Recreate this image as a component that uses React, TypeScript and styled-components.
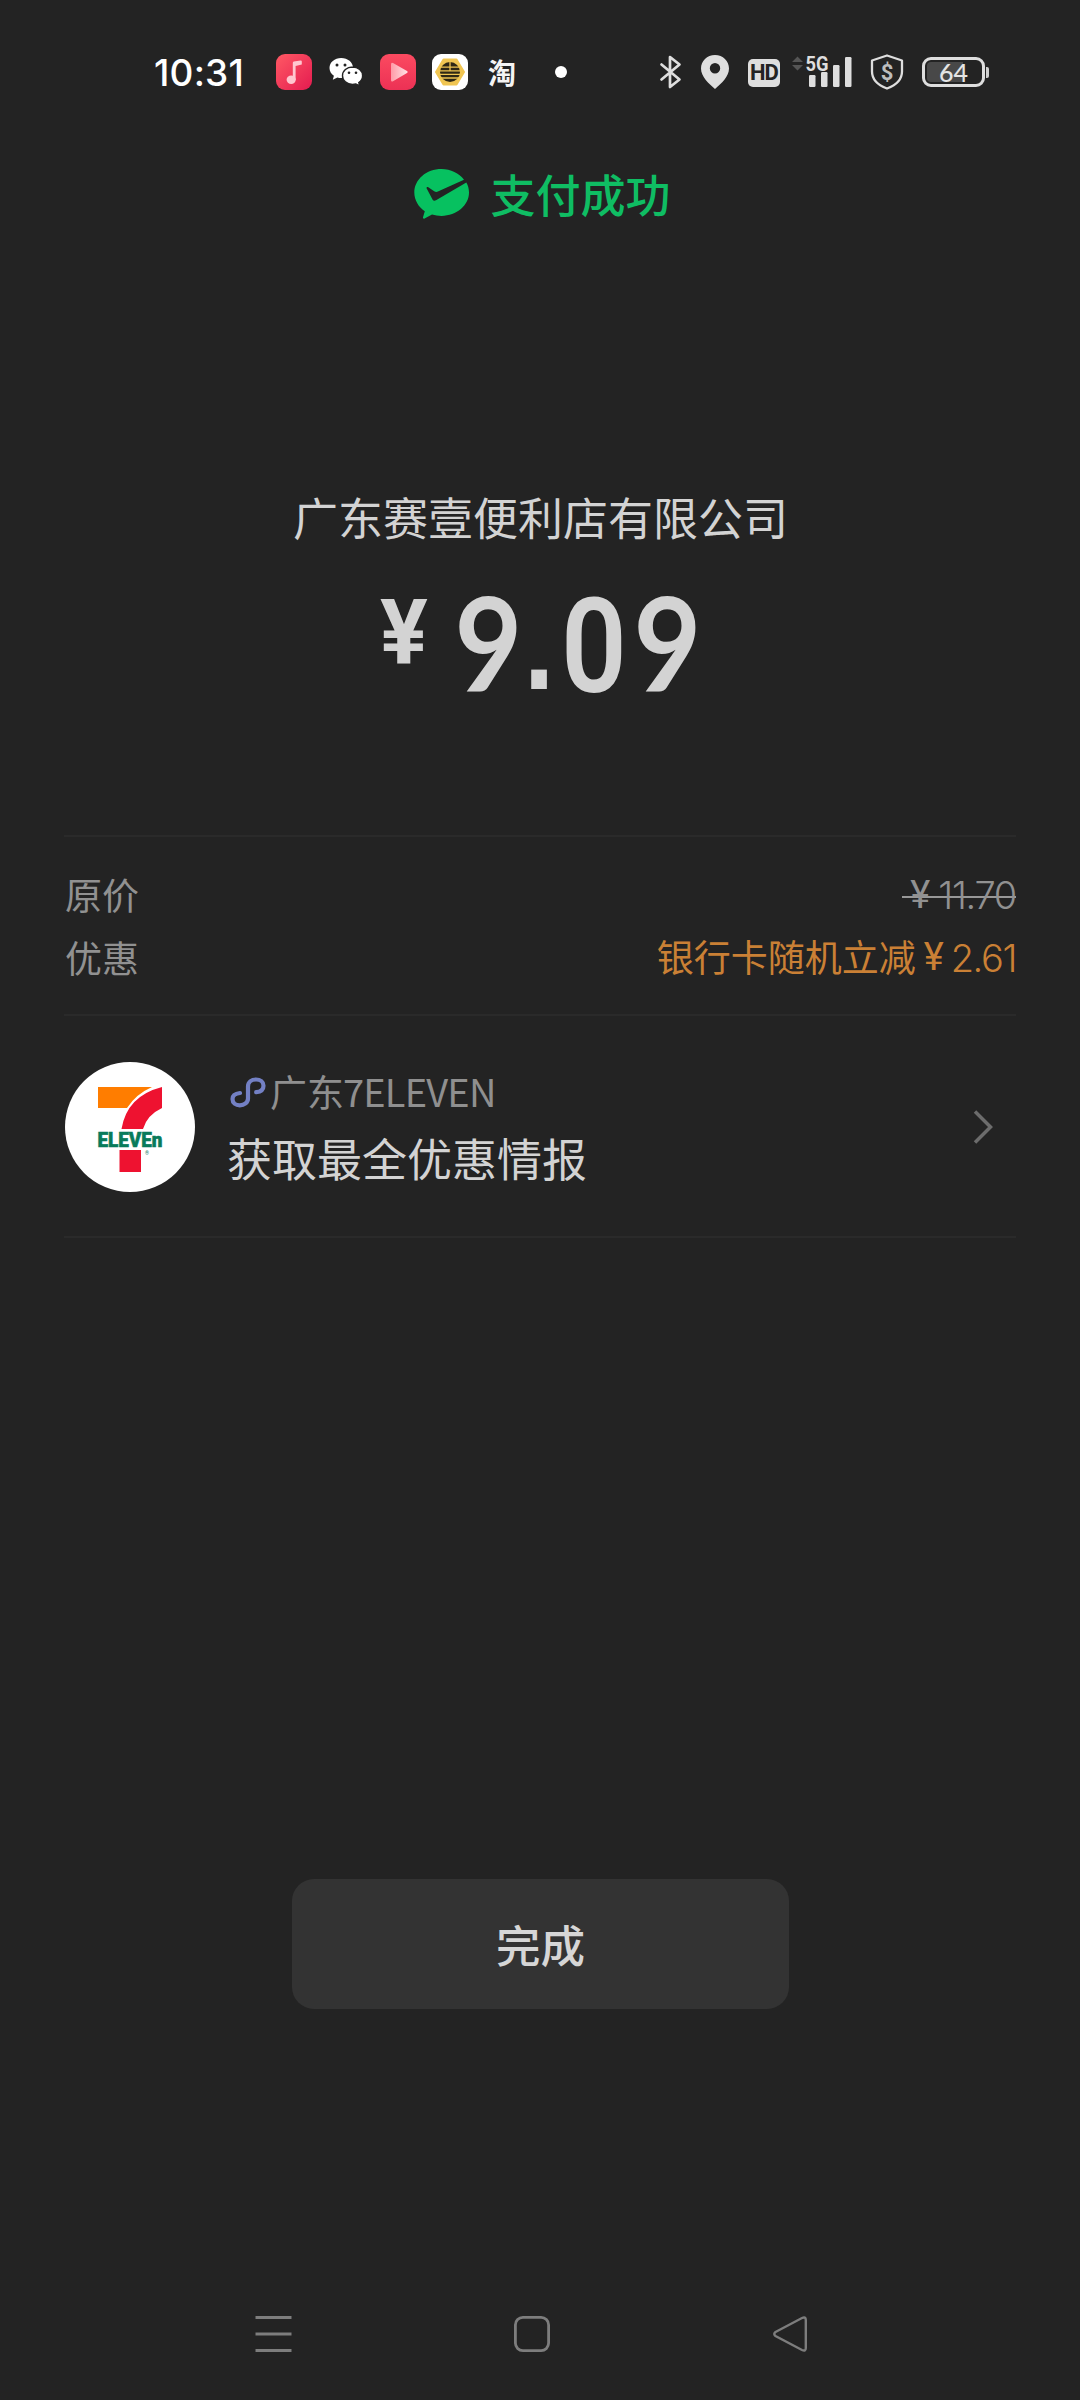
import React from 'react';
import styled, { createGlobalStyle } from 'styled-components';

const cjk = '"Noto Sans CJK SC", sans-serif';

const GlobalStyle = createGlobalStyle`
  * { box-sizing: border-box; }
  body { margin: 0; background: #232323; font-family: ${cjk}; }
  svg { display: block; flex: none; overflow: visible; }
`;

const Screen = styled.div`
  width: 1080px;
  height: 2400px;
  display: flex;
  flex-direction: column;
  background: #232323;
  color: #d3d3d3;
  white-space: nowrap;
  overflow: hidden;
`;

const StatusBar = styled.header`
  height: 144px;
  padding: 0 91px 0 154px;
  display: flex;
  align-items: center;
  justify-content: space-between;
`;

const StatusGroup = styled.div<{ $gap: number }>`
  display: flex;
  align-items: center;
  gap: ${p => p.$gap}px;
`;

const Clock = styled.time`
  width: 106px;
  padding-top: 1px;
  font: 500 37px/44px Inter, sans-serif;
  letter-spacing: 0.2px;
  color: #fff;
`;

const AppTile = styled.div<{ $bg: string }>`
  width: 36px;
  height: 36px;
  border-radius: 9px;
  display: flex;
  align-items: center;
  justify-content: center;
  background: ${p => p.$bg};
`;

const TaobaoGlyph = styled.span`
  font: 700 28px/36px ${cjk};
  color: #f4f4f4;
`;

const Dot = styled.span`
  width: 12px;
  height: 12px;
  margin-left: 19px;
  border-radius: 50%;
  background: #fff;
`;

const HdBadge = styled.span`
  width: 32px;
  height: 28px;
  margin-top: 2px;
  border-radius: 5px;
  display: flex;
  align-items: center;
  justify-content: center;
  background: #dedede;
  color: #232323;
  font: 700 22px/28px Roboto, sans-serif;
  letter-spacing: -1px;
`;

const Battery = styled.div`
  display: flex;
  align-items: center;
  gap: 1px;
`;

const BatteryBody = styled.div`
  width: 63px;
  height: 30px;
  border: 3px solid #dedede;
  border-radius: 9px;
  display: flex;
  align-items: center;
  justify-content: center;
  background: linear-gradient(90deg, #484848 36px, #232323 36px) content-box;
  padding: 2px;
  color: #e4e4e4;
  font: 500 25px/26px Lato, sans-serif;
`;

const BatteryTip = styled.span`
  width: 3px;
  height: 11px;
  border-radius: 0 2px 2px 0;
  background: #cfcfcf;
`;

const ResultHeader = styled.div`
  height: 106px;
  padding: 0 0 6px 5px;
  display: flex;
  justify-content: center;
  align-items: center;
  gap: 20px;
`;

const ResultText = styled.h1`
  margin: 0;
  font: 500 45px/66px ${cjk};
  color: #0fbd63;
`;

const Payee = styled.h2`
  margin: 234px 0 0;
  padding-left: 1px;
  text-align: center;
  font: 400 45px/66px ${cjk};
`;

const Amount = styled.div`
  height: 144px;
  margin-top: 20px;
  padding-left: 380px;
  display: flex;
  align-items: flex-start;
`;

const Currency = styled.span`
  width: 75px;
  margin-top: 13px;
  font: 700 91px/100px Roboto, sans-serif;
  transform: scaleX(0.98);
  transform-origin: left center;
`;

const Digit = styled.span<{ $width: number; $scale: number; $font: string }>`
  width: ${p => p.$width}px;
  display: flex;
  justify-content: center;
  font: ${p => p.$font};
  transform: scaleX(${p => p.$scale});
`;

const Section = styled.section`
  width: 952px;
  margin: 0 64px;
  border-top: 2px solid #2a2a2a;
`;

const Prices = styled(Section)`
  height: 179px;
  margin-top: 121px;
  padding: 26px 0 0 1px;
`;

const PriceRow = styled.div`
  height: 63px;
  display: flex;
  align-items: center;
  justify-content: space-between;
  font: 400 37px/63px ${cjk};
  color: #919191;
`;

const Original = styled.span`
  display: flex;
  align-items: center;
  background: linear-gradient(#989898, #989898) 0 34px / 100% 2px no-repeat;
`;

const Discount = styled.span`
  display: flex;
  color: #ca8035;
`;

const Money = styled.span<{ $spacing: number }>`
  padding-top: 2px;
  font: 350 38px/63px Inter, sans-serif;
  letter-spacing: ${p => p.$spacing}px;
`;

const YenSign = styled.span<{ $after: number }>`
  padding-top: 1px;
  font: 400 38px/63px Roboto, sans-serif;
  margin: 0 ${p => p.$after}px 0 8px;
`;

const Merchant = styled(Section)`
  height: 224px;
  padding: 2px 23px 0 1px;
  display: flex;
  align-items: center;
  border-bottom: 2px solid #2a2a2a;
`;

const Avatar = styled.div`
  width: 130px;
  height: 130px;
  border-radius: 50%;
  background: #fff;
`;

const MerchantText = styled.div`
  flex: 1;
  margin-left: 32px;
  display: flex;
  flex-direction: column;
`;

const MerchantName = styled.div`
  display: flex;
  align-items: center;
  gap: 4px;
  padding-left: 3px;
  font: 400 37px/56px ${cjk};
  color: #8f8f8f;
`;

const LatinName = styled.span`
  font: 400 38px/56px ${cjk};
  letter-spacing: -0.8px;
  margin-left: -5px;
`;

const Promo = styled.div`
  margin-top: 6px;
  font: 400 45px/66px ${cjk};
`;

const DoneButton = styled.button`
  width: 497px;
  height: 130px;
  margin: 641px 0 0 292px;
  padding: 0;
  border: 0;
  border-radius: 22px;
  background: #333;
  color: #d6d6d6;
  font: 500 44.5px/66px ${cjk};
`;

const NavBar = styled.nav`
  height: 132px;
  margin-top: auto;
  padding: 0 272px 0 255px;
  display: flex;
  align-items: center;
  justify-content: space-between;
`;

const MusicIcon = () => (
  <svg width="36" height="36" viewBox="0 0 36 36">
    <ellipse cx="15.2" cy="25.8" rx="4.6" ry="4.2" fill="#ffc6cf" />
    <path d="M16.800 26V8.8Q16.800 7.800 17.800 7.600L24.600 6.500Q25.800 6.400 25.800 7.500V10.400L19.600 12V26Z" fill="#ffc6cf" />
  </svg>
);

const WeChatIcon = () => (
  <svg width="36" height="36" viewBox="0 0 36 36">
    <path d="M13.2 4C6.6 4 1.5 8.4 1.5 14c0 3.2 1.7 6 4.4 7.8L4.8 25.8l4.6-2.4c1.2.4 2.5.5 3.8.5 6.6 0 11.8-4.400 11.800-10S19.800 4 13.200 4Z" fill="#fff" />
    <path d="M24.500 13c-5.700 0-10 3.800-10 8.700s4.300 8.700 10 8.700c1.200 0 2.300-.2 3.400-.5l3.800 2-.9-3.300c2.400-1.600 3.800-4.100 3.800-6.900 0-4.900-4.400-8.700-10.100-8.700Z" fill="#fff" stroke="#232323" strokeWidth="1.400" />
    <g fill="#232323"><circle cx="9" cy="11" r="1.500" /><circle cx="17" cy="11" r="1.500" /><circle cx="21" cy="18.800" r="1.300" /><circle cx="28" cy="18.800" r="1.300" /></g>
  </svg>
);

const PlayIcon = () => (
  <svg width="36" height="36" viewBox="0 0 36 36">
    <defs><linearGradient id="play"><stop stopColor="#ff9aa7" /><stop offset="1" stopColor="#ffe3e6" /></linearGradient></defs>
    <path d="M11 10.200Q11 8 13 9L27 17Q28.600 18 27 19L13 27.300Q11 28.200 11 26Z" fill="url(#play)" />
  </svg>
);

const BeeIcon = () => (
  <svg width="36" height="36" viewBox="0 0 36 36">
    <path d="M11.500 5.500h13L32 18l-7.500 12.500h-13L4 18Z" fill="#f0c552" stroke="#f0c552" strokeWidth="2" strokeLinejoin="round" />
    <circle cx="18" cy="18" r="10" fill="#2e2715" />
    <path d="M9 13.200h18M8 16.800h20M8 20.400h20M9 24h18M18 8v8.500" stroke="#eec452" strokeWidth="1.300" />
  </svg>
);

const BluetoothIcon = () => (
  <svg width="22" height="34" viewBox="0 0 22 34" fill="none" stroke="#dedede" strokeWidth="2.700" strokeLinejoin="round" strokeLinecap="round">
    <path d="M1.500 9.500 19.500 24.500 10 32V2L19.500 9.500 1.500 24.500" />
  </svg>
);

const PinIcon = () => (
  <svg width="28" height="34" viewBox="0 0 28 34">
    <path fillRule="evenodd" d="M14 0C6 0 0 6 0 13.500 0 21.500 7.500 28.500 14 34c6.500-5.500 14-12.500 14-20.500C28 6 22 0 14 0Zm0 8a5.200 5.200 0 1 1 0 10.400A5.200 5.200 0 0 1 14 8Z" fill="#dedede" />
  </svg>
);

const SignalIcon = () => (
  <svg width="60" height="34" viewBox="0 0 60 34">
    <path d="M0 7 5.500 1.500 11 7ZM0 10 5.500 15.500 11 10Z" fill="#555" />
    <text x="13.500" y="15.500" fontFamily="Roboto, sans-serif" fontWeight="700" fontSize="20" fill="#dedede" textLength="23" lengthAdjust="spacingAndGlyphs">5G</text>
    <g fill="#dedede"><rect x="17" y="20" width="6.500" height="12" rx="1.200" /><rect x="29" y="17" width="6.500" height="15" rx="1.200" /><rect x="41" y="10" width="6.500" height="22" rx="1.200" /><rect x="53" y="2" width="6.500" height="30" rx="1.200" /></g>
  </svg>
);

const ShieldIcon = () => (
  <svg width="34" height="36" viewBox="0 0 34 36">
    <path d="M17 1.500 32 6.500V17.500C32 26 25 31.500 17 34.500 9 31.500 2 26 2 17.500V6.500Z" fill="none" stroke="#dedede" strokeWidth="2.300" strokeLinejoin="round" />
    <text x="17" y="26" textAnchor="middle" fontFamily="Roboto, sans-serif" fontWeight="700" fontSize="22" fill="#bdbdbd">$</text>
  </svg>
);

const SuccessIcon = () => (
  <svg width="56" height="50" viewBox="0 0 56 50">
    <path d="M27.500 0C12.300 0 .3 10.500.3 23.600c0 7.600 4.100 14.400 10.500 18.700L9 48.200c-.3 1.200.7 1.800 1.600 1.300L18 45.500c3 .9 6.200 1.400 9.500 1.400 15.200 0 27.500-10.400 27.500-23.300 0-3.800-.9-7.300-2.700-10.200L22 31.300c-1.600.9-2.800.5-3.600-1L12.700 19.500c-.6-1.300.6-2 1.600-1.300l5.900 4c1.200.8 2.400.9 3.700.4L50 10.700C45 4.200 36.800 0 27.500 0Z" fill="#07c160" />
  </svg>
);

const SevenElevenLogo = () => (
  <svg width="130" height="130" viewBox="0 0 130 130">
    <path d="M33 25H87Q71 32 62 46H33Z" fill="#ff7d00" />
    <path d="M97 25V46Q82 53 78 67H56.500Q62 34 97 25Z" fill="#ee1230" />
    <rect x="54.500" y="88" width="21.500" height="22" fill="#ee1230" />
    <text x="32.500" y="85.300" fontFamily="Roboto, sans-serif" fontWeight="900" fontSize="21" fill="#087b5b" stroke="#087b5b" strokeWidth="0.600" textLength="65" lengthAdjust="spacingAndGlyphs">ELEVEn</text>
    <text x="80" y="93" fontFamily="Roboto, sans-serif" fontSize="5" fill="#087b5b">®</text>
  </svg>
);

const MiniProgramIcon = () => (
  <svg width="36" height="42" viewBox="0 0 36 42">
    <path d="M10 23C5.500 23.500 2.500 25.500 2.500 29c0 4 3.300 6.300 7.300 6.300 4.500 0 8.200-2.800 8.200-6.800V16.500C18 12 21.500 9.500 26 9.500c4.200 0 7.500 2.400 7.500 6.200 0 3.800-3 6-7.300 6.500" fill="none" stroke="#7380c4" strokeWidth="4.200" strokeLinecap="round" />
  </svg>
);

const Chevron = () => (
  <svg width="20" height="34" viewBox="0 0 20 34">
    <path d="M2 1.500 17.500 17 2 32.500" fill="none" stroke="#6c6c6c" strokeWidth="3.500" />
  </svg>
);

const MenuIcon = () => (
  <svg width="37" height="36" viewBox="0 0 37 36"><path d="M.5 1.500H36.500M.5 18H36.500M.5 34.500H36.500" stroke="#7d7d7d" strokeWidth="3" /></svg>
);

const HomeIcon = () => (
  <svg width="38" height="36" viewBox="0 0 38 36"><rect x="1.400" y="1.400" width="33.200" height="33.200" rx="7.500" fill="none" stroke="#7d7d7d" strokeWidth="2.800" /></svg>
);

const BackIcon = () => (
  <svg width="35" height="36" viewBox="0 0 35 36"><path d="M2.500 16 29 2Q32.800.3 32.800 4V32Q32.800 35.700 29 34L2.500 20Q0 18 2.500 16Z" fill="none" stroke="#7d7d7d" strokeWidth="2.400" /></svg>
);

const nineFont = '700 130px/144px Lato, sans-serif';

export default function App() {
  return (
    <>
      <GlobalStyle />
      <Screen>
        <StatusBar>
          <StatusGroup $gap={16}>
            <Clock>10:31</Clock>
            <AppTile $bg="linear-gradient(135deg, #ff5964, #e41b50)"><MusicIcon /></AppTile>
            <WeChatIcon />
            <AppTile $bg="linear-gradient(#fb4a60, #ec3155)"><PlayIcon /></AppTile>
            <AppTile $bg="#fff"><BeeIcon /></AppTile>
            <AppTile $bg="transparent"><TaobaoGlyph>淘</TaobaoGlyph></AppTile>
            <Dot />
          </StatusGroup>
          <StatusGroup $gap={12}>
            <StatusGroup $gap={19}>
              <BluetoothIcon />
              <PinIcon />
              <HdBadge>HD</HdBadge>
            </StatusGroup>
            <StatusGroup $gap={18}>
              <SignalIcon />
              <ShieldIcon />
              <Battery><BatteryBody>64</BatteryBody><BatteryTip /></Battery>
            </StatusGroup>
          </StatusGroup>
        </StatusBar>

        <ResultHeader>
          <SuccessIcon />
          <ResultText>支付成功</ResultText>
        </ResultHeader>

        <Payee>广东赛壹便利店有限公司</Payee>
        <Amount>
          <Currency>¥</Currency>
          <Digit $width={67} $scale={0.9} $font={nineFont}>9</Digit>
          <Digit $width={34} $scale={0.85} $font='700 130px/148px "Liberation Sans", sans-serif'>.</Digit>
          <Digit $width={76} $scale={0.88} $font="600 131px/154px Roboto, sans-serif">0</Digit>
          <Digit $width={71} $scale={0.9} $font={nineFont}>9</Digit>
        </Amount>

        <Prices>
          <PriceRow>
            <span>原价</span>
            <Original><YenSign $after={8}>¥</YenSign><Money $spacing={-1.3}>11.70</Money></Original>
          </PriceRow>
          <PriceRow>
            <span>优惠</span>
            <Discount>银行卡随机立减<YenSign $after={7}>¥</YenSign><Money $spacing={-1.4}>2.61</Money></Discount>
          </PriceRow>
        </Prices>

        <Merchant>
          <Avatar><SevenElevenLogo /></Avatar>
          <MerchantText>
            <MerchantName><MiniProgramIcon />广东<LatinName>7ELEVEN</LatinName></MerchantName>
            <Promo>获取最全优惠情报</Promo>
          </MerchantText>
          <Chevron />
        </Merchant>

        <DoneButton>完成</DoneButton>

        <NavBar>
          <MenuIcon />
          <HomeIcon />
          <BackIcon />
        </NavBar>
      </Screen>
    </>
  );
}
